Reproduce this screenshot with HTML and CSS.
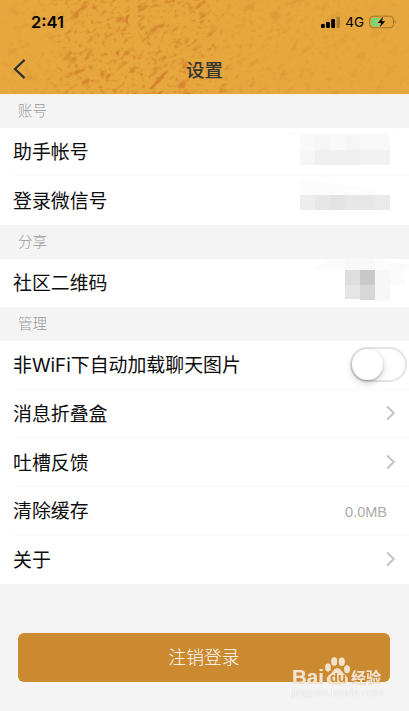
FILE: index.html
```
<!DOCTYPE html>
<html lang="zh-CN">
<head>
  <meta charset="UTF-8">
  <meta name="viewport" content="width=device-width, initial-scale=1.0">
  <title>设置</title>
  <link rel="stylesheet" href="styles.css">
</head>
<body>
  <div class="page">
    <header class="header">
      <!-- 纹理背景 -->
      <svg class="header-texture" width="409" height="94" viewBox="0 0 409 94">
        <defs>
          <filter id="rough" x="0" y="0" width="100%" height="100%" color-interpolation-filters="sRGB">
            <feTurbulence type="fractalNoise" baseFrequency="0.07 0.13" numOctaves="6" seed="21"/>
            <feColorMatrix values="0 0 0 0 0.81  0 0 0 0 0.46  0 0 0 0 0.16  6 0 0 0 -3.6"/>
          </filter>
          <filter id="grain" x="0" y="0" width="100%" height="100%" color-interpolation-filters="sRGB">
            <feTurbulence type="fractalNoise" baseFrequency="0.2 0.28" numOctaves="3" seed="3"/>
            <feColorMatrix values="0 0 0 0 0.82  0 0 0 0 0.50  0 0 0 0 0.16  5 0 0 0 -2.8"/>
          </filter>
          <linearGradient id="fade">
            <stop offset="0" stop-color="#333"/>
            <stop offset="0.1" stop-color="#444"/>
            <stop offset="0.2" stop-color="#ccc"/>
            <stop offset="0.48" stop-color="#bbb"/>
            <stop offset="0.6" stop-color="#555"/>
            <stop offset="1" stop-color="#222"/>
          </linearGradient>
          <mask id="spread"><rect width="409" height="94" fill="url(#fade)"/></mask>
        </defs>
        <rect width="409" height="94" fill="#e6a83e"/>
        <g mask="url(#spread)">
          <rect x="-60" y="-220" width="560" height="560" transform="rotate(-38 204 47)" filter="url(#grain)" opacity="0.8"/>
          <rect x="-60" y="-220" width="560" height="560" transform="rotate(-38 204 47)" filter="url(#rough)" opacity="0.85"/>
        </g>
        <path d="M130 14c-4 1-6 5-4 9l3 2c-2-4-1-8 1-11zM120 49c-2 3-4 2-5 4l4 4c-1-3 1-5 1-8zM149 90l8-11 12-10-9 13-8 7z" fill="#cf782b" opacity="0.75"/>
      </svg>
      <div class="status-bar">
        <span class="time">2:41</span>
        <div class="status-right">
          <svg width="20" height="12" viewBox="0 0 20 12">
            <rect x="0" y="8" width="3.8" height="4" rx="1"/>
            <rect x="5.1" y="6" width="3.8" height="6" rx="1"/>
            <rect x="10.2" y="3" width="3.8" height="9" rx="1"/>
            <rect x="15.5" y="0.5" width="3.4" height="11.5" rx="1" opacity="0.25"/>
          </svg>
          <span class="network">4G</span>
          <svg width="28" height="14" viewBox="0 0 28 14">
            <rect x="0.7" y="1.2" width="23.8" height="11.6" rx="3.4" fill="none" stroke="#9c762d"/>
            <path d="M4.2 2.9h7.2l-3 5h3l-1 3.3H4.2a1.8 1.8 0 0 1-1.8-1.8V4.7a1.8 1.8 0 0 1 1.8-1.8z" fill="#76d876"/>
            <path d="M25.8 5v4c1.4-.6 1.4-3.4 0-4z" fill="#9c762d"/>
            <path d="M14 1.8L8.8 7.9h3.3l-1.2 4.3 5.3-6H13z" stroke="#e6a83e" stroke-width="1.6" paint-order="stroke"/>
          </svg>
        </div>
      </div>
      <div class="nav-bar">
        <svg class="back" width="14" height="20" viewBox="0 0 14 20"><path d="M11.6 0.9L2 10l9.6 9.1"/></svg>
        <h1 class="title">设置</h1>
      </div>
    </header>

    <h2 class="group-title">账号</h2>
    <ul class="group">
      <li class="row">
        <span class="label">助手帐号</span>
        <!-- 打码 -->
        <svg class="mosaic" width="120" height="48" viewBox="0 0 120 48" shape-rendering="crispEdges">
          <path d="M0 8l4-2h88l22 2z" fill="#fbfbfb"/>
          <path d="M11 8h90v15H11z" fill="#f9f9f9"/>
          <path d="M26 8h15v15H26zM56 8h15v15H56z" fill="#f6f6f6"/>
          <path d="M11 23h15v15H11z" fill="#f6f6f6"/>
          <path d="M26 23h45v15H26z" fill="#efefef"/>
          <path d="M71 23h30v15H71z" fill="#f2f2f2"/>
        </svg>
      </li>
      <li class="row">
        <span class="label">登录微信号</span>
        <svg class="mosaic" width="120" height="48" viewBox="0 0 120 48" shape-rendering="crispEdges">
          <path d="M11 5h20l25 4 30 4v6H11z" fill="#fcfcfc"/>
          <path d="M11 19h15v15H11z" fill="#ededed"/>
          <path d="M26 19h15v15H26zM56 19h15v15H56z" fill="#e7e7e7"/>
          <path d="M41 19h15v15H41z" fill="#e3e3e3"/>
          <path d="M71 19h15v15H71z" fill="#e7e7e7"/>
          <path d="M86 19h15v15H86z" fill="#eaeaea"/>
        </svg>
      </li>
    </ul>

    <h2 class="group-title">分享</h2>
    <ul class="group">
      <li class="row">
        <span class="label">社区二维码</span>
        <svg class="mosaic" width="120" height="48" viewBox="0 0 120 48" shape-rendering="crispEdges">
          <path d="M23 12l16-11h45l18 4 18 1v6z" fill="#fbfbfb"/>
          <path d="M56 1h30v11H56z" fill="#f8f8f8"/>
          <path d="M56 12h15v15H56z" fill="#dedede"/>
          <path d="M71 12h15v15H71z" fill="#c8c8c8"/>
          <path d="M56 27h15v14H56z" fill="#e5e5e5"/>
          <path d="M71 27h15v15H71z" fill="#d7d7d7"/>
          <path d="M86 12h15v30H86z" fill="#f7f7f7"/>
          <path d="M101 12h15v15h-15zM86 42h17l-4 3H90z" fill="#fbfbfb"/>
        </svg>
      </li>
    </ul>

    <h2 class="group-title">管理</h2>
    <ul class="group">
      <li class="row">
        <span class="label">非WiFi下自动加载聊天图片</span>
        <div class="switch"><div class="switch-knob"></div></div>
      </li>
      <li class="row">
        <span class="label">消息折叠盒</span>
        <svg class="arrow" width="10" height="16" viewBox="0 0 10 16"><path d="M1.2 1.5L7.8 8l-6.6 6.5"/></svg>
      </li>
      <li class="row">
        <span class="label">吐槽反馈</span>
        <svg class="arrow" width="10" height="16" viewBox="0 0 10 16"><path d="M1.2 1.5L7.8 8l-6.6 6.5"/></svg>
      </li>
      <li class="row">
        <span class="label">清除缓存</span>
        <span class="value">0.0MB</span>
      </li>
      <li class="row">
        <span class="label">关于</span>
        <svg class="arrow" width="10" height="16" viewBox="0 0 10 16"><path d="M1.2 1.5L7.8 8l-6.6 6.5"/></svg>
      </li>
    </ul>

    <button class="logout">注销登录</button>

    <!-- 水印 -->
    <div class="watermark">
      <div class="watermark-logo">
        <span class="watermark-bai">Bai</span>
        <svg width="27" height="28" viewBox="0 0 27 28">
          <ellipse cx="4" cy="10.6" rx="2.9" ry="4"/>
          <ellipse cx="10.2" cy="4.5" rx="3" ry="4.2"/>
          <ellipse cx="17.8" cy="4.8" rx="3" ry="4.2"/>
          <ellipse cx="23" cy="12.2" rx="2.9" ry="4"/>
          <path d="M13.3 11.2c-3.2 0-4 3.2-6.3 5.2-2.5 2.2-5 3.8-4 7.6.9 3.5 4 3.2 10 3.2s9.7.4 10.7-3.2c1-3.8-2-5.4-4.2-7.6-2-2-2.900-5.200-6.200-5.200z"/>
          <text x="6" y="24.5" class="watermark-du">du</text>
        </svg>
        <span class="watermark-name">经验</span>
      </div>
      <div class="watermark-url">jingyan.baidu.com</div>
    </div>
  </div>
</body>
</html>
```
FILE: styles.css
```
* {
  box-sizing: border-box;
}

body {
  margin: 0;
  background: #f4f4f4;
  font-family: "Liberation Sans", "Noto Sans CJK SC", sans-serif;
  color: #0c0c0c;
}

.page {
  position: relative;
  height: 711px;
  overflow: hidden;
}

/* 顶部 */
.header {
  position: relative;
  height: 94px;
  overflow: hidden;
}

.header-texture {
  position: absolute;
  top: 0;
  left: 0;
}

.status-bar {
  position: relative;
  display: flex;
  justify-content: space-between;
  align-items: center;
  height: 43px;
  padding: 0 12px 0 31px;
}

.time {
  font-family: Inter, sans-serif;
  font-size: 16.5px;
  font-weight: 600;
  color: #000;
}

.status-right {
  display: flex;
  align-items: center;
}

.network {
  margin: 1px 5px 0 4px;
  font-family: Inter, sans-serif;
  font-size: 13.5px;
  font-weight: 400;
  color: #000;
}

.nav-bar {
  position: relative;
  display: grid;
  grid-template-columns: 40px 1fr 40px;
  align-items: center;
  height: 51px;
}

.back {
  margin: 1px 0 0 13px;
  fill: none;
  stroke: #303030;
  stroke-width: 2.2;
}

.title {
  margin: 0;
  text-align: center;
  font-size: 18.5px;
  font-weight: 500;
  color: #333;
}

/* 列表 */
.group-title {
  margin: 0;
  height: 33.6px;
  padding-left: 18px;
  line-height: 35px;
  font-size: 14.5px;
  font-weight: 300;
  color: #999;
}

.group {
  margin: 0;
  padding: 0;
  list-style: none;
  background: #fff;
}

.row {
  display: flex;
  justify-content: space-between;
  align-items: center;
  height: 48.7px;
  padding: 0 0 2px 13px;
  font-family: Inter, "Noto Sans CJK SC", sans-serif;
  font-size: 18.9px;
  line-height: 28px;
  background: linear-gradient(#f9f9f9, #f9f9f9) 13px 100% / 100% 1px no-repeat;
}

.row:last-child {
  background: none;
}

.label {
  padding-top: 4px;
}

.arrow {
  margin: 1px 13px 0 0;
  fill: none;
  stroke: #c4c4c8;
  stroke-width: 2;
}

.value {
  margin: 3px 22px 0 0;
  font-family: "Liberation Sans", sans-serif;
  font-size: 14.5px;
  color: #aaa;
}

.switch {
  width: 57px;
  height: 35px;
  margin: 0 2px 0 0;
  border: 2px solid #e4e4e4;
  border-radius: 18px;
}

.switch-knob {
  width: 31px;
  height: 31px;
  border-radius: 50%;
  background: #fff;
  box-shadow: 0 3px 7px rgba(0, 0, 0, 0.2), 0 1px 2px rgba(0, 0, 0, 0.2);
}

.logout {
  display: block;
  width: 372px;
  height: 49px;
  margin: 48.3px 0 0 18px;
  padding: 0 0 2px;
  border: 0;
  border-radius: 6px;
  background: #cb8930;
  font-family: inherit;
  font-size: 17.7px;
  font-weight: 300;
  color: #fff;
}

/* 水印 */
.watermark {
  position: absolute;
  left: 292px;
  top: 657px;
  width: 90px;
}

.watermark-logo {
  display: flex;
  align-items: flex-end;
  height: 28px;
  color: #f3e4cf;
  fill: #f3e1c8;
  filter: drop-shadow(0 0 0.5px rgba(200, 190, 180, 0.7));
}

.watermark-bai {
  font-size: 20.5px;
  font-weight: 700;
  line-height: 17px;
}

.watermark-du {
  font-size: 13px;
  font-weight: 700;
  fill: #cb8930;
}

.watermark-name {
  font-size: 15px;
  font-weight: 700;
  line-height: 15px;
}

.watermark-url {
  font-size: 11.3px;
  line-height: 14px;
  white-space: nowrap;
  color: #fbfbfb;
  text-shadow: 0 0 1px #c4c4c4;
}
```
